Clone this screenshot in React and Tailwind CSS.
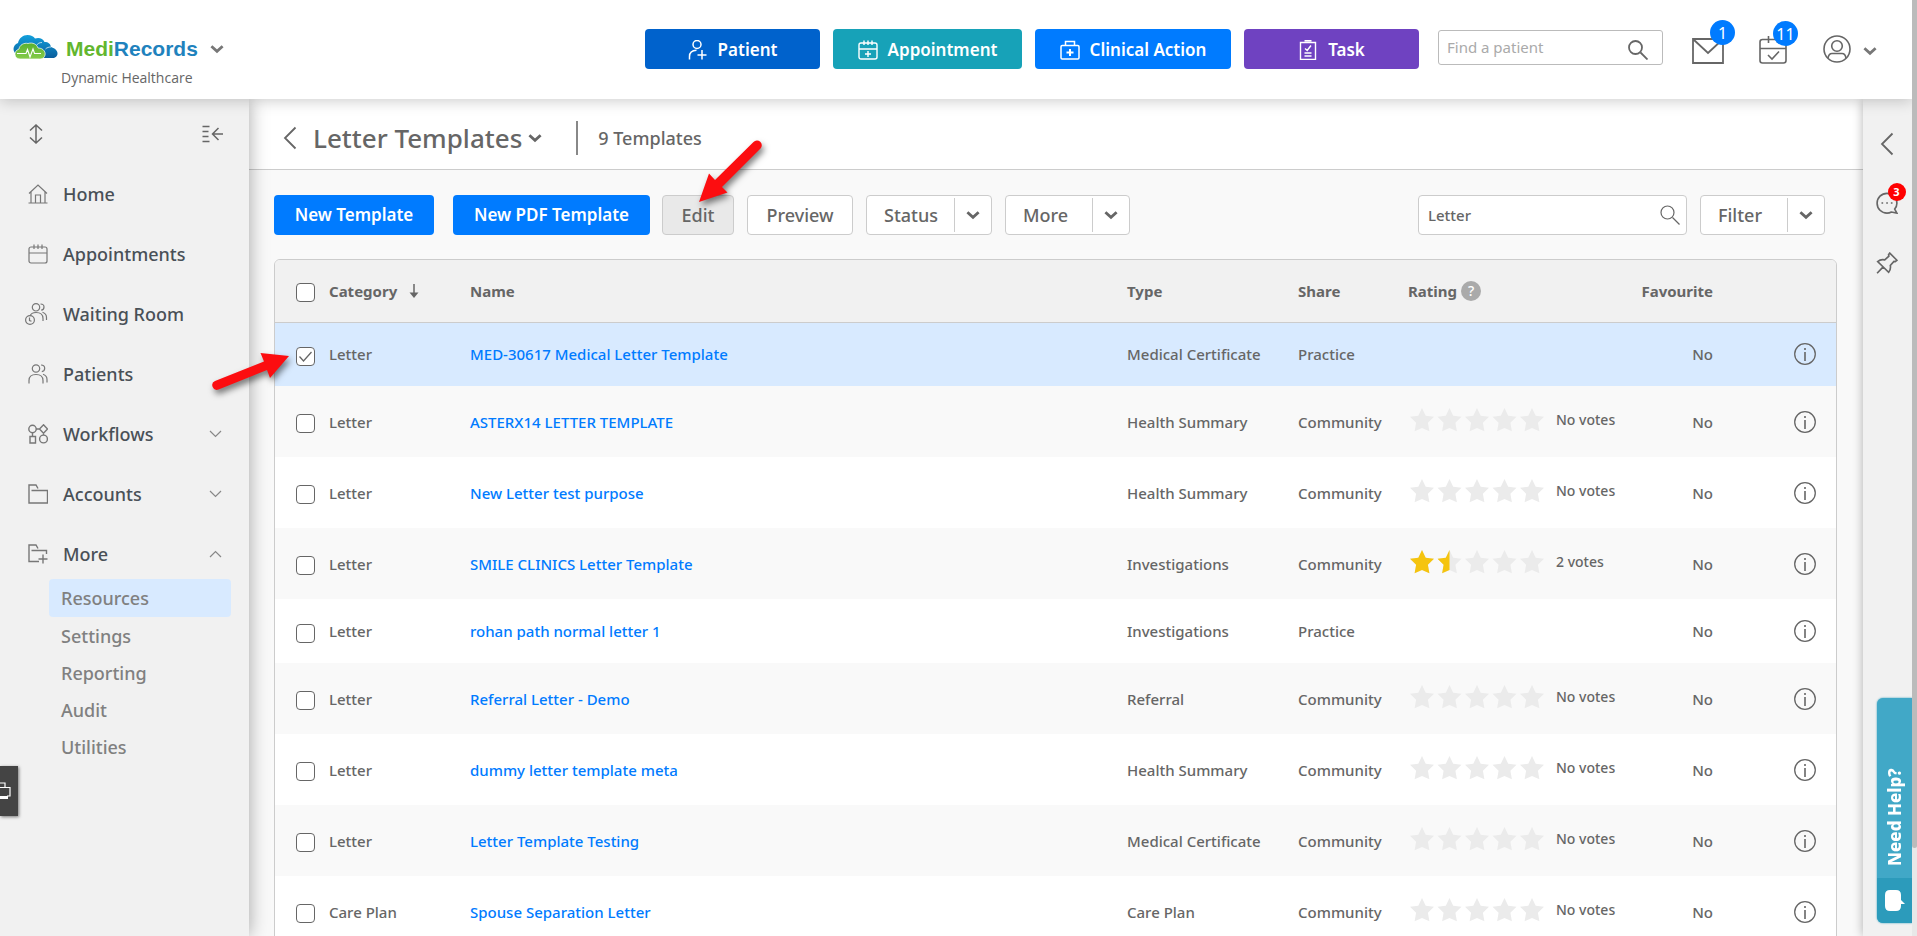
import React, { useState } from 'react';

const TEMPLATES = [
  { id: 1, category: 'Letter', name: 'MED-30617 Medical Letter Template', type: 'Medical Certificate', share: 'Practice' },
  { id: 2, category: 'Letter', name: 'ASTERX14 LETTER TEMPLATE', type: 'Health Summary', share: 'Community', rating: 0, votes: 'No votes' },
  { id: 3, category: 'Letter', name: 'New Letter test purpose', type: 'Health Summary', share: 'Community', rating: 0, votes: 'No votes' },
  { id: 4, category: 'Letter', name: 'SMILE CLINICS Letter Template', type: 'Investigations', share: 'Community', rating: 1.5, votes: '2 votes' },
  { id: 5, category: 'Letter', name: 'rohan path normal letter 1', type: 'Investigations', share: 'Practice' },
  { id: 6, category: 'Letter', name: 'Referral Letter - Demo', type: 'Referral', share: 'Community', rating: 0, votes: 'No votes' },
  { id: 7, category: 'Letter', name: 'dummy letter template meta', type: 'Health Summary', share: 'Community', rating: 0, votes: 'No votes' },
  { id: 8, category: 'Letter', name: 'Letter Template Testing', type: 'Medical Certificate', share: 'Community', rating: 0, votes: 'No votes' },
  { id: 9, category: 'Care Plan', name: 'Spouse Separation Letter', type: 'Care Plan', share: 'Community', rating: 0, votes: 'No votes' },
];

const SUB_ITEMS = ['Resources', 'Settings', 'Reporting', 'Audit', 'Utilities'];

const Icon = ({ size = 20, width = 1.2, className = '', children }) => (
  <svg
    width={size}
    height={size}
    viewBox="0 0 20 20"
    fill="none"
    stroke="currentColor"
    strokeWidth={width}
    className={`shrink-0 ${className}`}
    aria-hidden="true"
  >
    {children}
  </svg>
);

const HomeIcon = () => (
  <Icon>
    <path d="M1 9.500 10 1l9 8.500M3 8v10.500M17 8v10.500M.5 19h19M7.500 18.500v-7.500h5v7.500" />
  </Icon>
);

const CalendarIcon = () => (
  <Icon>
    <rect x="1" y="3" width="18" height="16" rx="2" />
    <path d="M1 9h18M6 .5v4.500M10 .5v4.500M14 .5v4.500" />
  </Icon>
);

const PatientsIcon = () => (
  <Icon>
    <circle cx="8" cy="4.500" r="3.700" />
    <path d="M1 19.500v-3c0-3.500 2.500-6 7-6s7 2.500 7 6v3M13 1c2.300 0 3.700 1.400 3.700 3.300S15.500 7.500 13.800 7.700M15 10.200c2.500.8 4 2.700 4 5.300v3" />
  </Icon>
);

const WaitingIcon = () => (
  <svg width="23" height="22" viewBox="0 0 23 22" fill="none" stroke="currentColor" strokeWidth="1.200" className="-ml-[3px] shrink-0" aria-hidden="true">
    <circle cx="11" cy="4.300" r="3.700" />
    <path d="M5 13c.8-2.300 3-3.500 6-3.500 4.500 0 7 2.500 7 6V18M15.500 1c2.300 0 3.500 1.400 3.500 3s-1 3-2.800 3.200M17.500 9.200c2.500.8 4 2.700 4 5.300v2.500" />
    <circle cx="5" cy="17" r="4.400" />
    <path d="M4.500 14.500v3l2 .7" />
  </svg>
);

const WorkflowIcon = () => (
  <Icon width={1.4}>
    <circle cx="4.500" cy="5" r="3.700" />
    <circle cx="15.500" cy="15" r="3.900" />
    <path d="M15.500.8 19.500 5l-4 4.200L11.500 5zM2 12.500h5.500V19H2zM8 5h3.500M4.500 8.700v3.800M15.500 9.200V11" />
  </Icon>
);

const FolderIcon = () => (
  <Icon width={1.4}>
    <path d="M3.500 6.500h16V19H1V1h7l2 3.500" />
  </Icon>
);

const FolderPlusIcon = () => (
  <Icon width={1.4}>
    <path d="M3.500 6.500h15V10M11 17.500H1V1h7l2 3.500M15 10.500v9M10.500 15h9" />
  </Icon>
);

const PatientPlusIcon = () => (
  <Icon width={1.5}>
    <circle cx="9" cy="4.500" r="4" />
    <path d="M1.500 19.500v-3c0-4 2.500-6 7-6.200M14 10v9.500M9.500 15h9" />
  </Icon>
);

const AppointmentPlusIcon = () => (
  <Icon width={1.4}>
    <rect x="1" y="3" width="18" height="16" rx="2" />
    <path d="M1 9h18M6 .5v4.500M10 .5v4.500M14 .5v4.500M10 11v6M7 14h6" />
  </Icon>
);

const MedkitIcon = () => (
  <Icon width={1.5}>
    <rect x="1" y="5.500" width="18" height="13.500" rx="1.200" />
    <path d="M5.500 5V1.500h9V5" />
    <path d="M10 9v7M6.500 12.500h7" strokeWidth="2" />
  </Icon>
);

const TaskIcon = () => (
  <Icon width={1.4}>
    <path d="M2.500 2.500h15v17h-15zM6.500.7h7M7 8.500l2.200 2L13 5.500M6.500 13h7M6.500 16h7" />
  </Icon>
);

const SearchIcon = ({ width = 1.2 }) => (
  <Icon width={width}>
    <circle cx="7.500" cy="7.500" r="6.500" />
    <path d="m12.500 12.500 7 7" />
  </Icon>
);

const InfoIcon = () => (
  <svg width="22" height="22" viewBox="0 0 22 22" fill="none" stroke="currentColor" strokeWidth="1.300" aria-hidden="true">
    <circle cx="11" cy="11" r="10.300" />
    <path d="M11 9v9M11 5v2" strokeWidth="1.600" />
  </svg>
);

// Heavy chevron used on drop-downs, thin one in the sidebar
const ChevronBold = ({ className = '' }) => (
  <svg width="14" height="10" viewBox="0 0 15 10" fill="none" stroke="currentColor" strokeWidth="3" className={`shrink-0 ${className}`} aria-hidden="true">
    <path d="m1.500 2 6 5.500 6-5.500" />
  </svg>
);

const ChevronThin = ({ up }) => (
  <svg width="13" height="8" viewBox="0 0 13 8" fill="none" stroke="currentColor" strokeWidth="1.200" className="shrink-0" aria-hidden="true">
    <path d={up ? 'm1 7 5.500-5.500L12 7' : 'm1 1 5.500 5.500L12 1'} />
  </svg>
);

const BackIcon = () => (
  <svg width="14" height="24" viewBox="0 0 14 24" fill="none" stroke="currentColor" strokeWidth="1.800" aria-hidden="true">
    <path d="M12.500 1.500 2 12l10.500 10.500" />
  </svg>
);

const Logo = () => (
  <svg width="45" height="25" viewBox="0 0 45 25" className="shrink-0" aria-hidden="true">
    <defs>
      <linearGradient id="cloudBlue" x1="0" y1="0" x2="0" y2="1">
        <stop offset="0" stopColor="#12a0dc" />
        <stop offset="1" stopColor="#0a5e9c" />
      </linearGradient>
      <linearGradient id="cloudGreen" x1="0" y1="0" x2="0" y2="1">
        <stop offset="0" stopColor="#58b030" />
        <stop offset="1" stopColor="#86cc4a" />
      </linearGradient>
    </defs>
    <path d="M5 20C-1 18-1 10 5 8 6 3 10 0 14.500 0c3.500 0 6 1.200 7.500 3.500 4-1.500 8 0 9.500 3.500 4 0 6 2 6.500 5 3 1 6.500 3 6.500 6.500 0 2.500-2 4.500-5 4.500H28z" fill="url(#cloudBlue)" />
    <path d="M29 7.500c-2.500 0-4.500 1-5.500 3M38 12c-2 0-4 .5-5.500 2" stroke="#fff" strokeWidth=".7" fill="none" />
    <path d="M7 24c-6 0-7-8-1-10 .5-4 5-6.500 9-5.500 5-1.500 9 1 10 4.500 6 0 8.500 5 6.500 8.500-1 2-3 2.500-5 2.500z" fill="url(#cloudGreen)" stroke="#fff" strokeWidth=".7" />
    <path d="M4 18.500h9l1.500-4 2.500 7.500 3-8 1.500 4.500H28" stroke="#fff" strokeWidth="1.100" fill="none" />
  </svg>
);

const NavButton = ({ icon, label, className }) => (
  <button className={`flex h-10 items-center justify-center gap-2.5 rounded pt-0.5 text-[17px] font-semibold text-white ${className}`}>
    {icon}
    <span>{label}</span>
  </button>
);

const Header = () => (
  <header className="relative z-30 flex h-[99px] shrink-0 items-start bg-white pr-[35px] text-[#666] shadow-[0_2px_14px_rgba(0,0,0,0.2)]">
    <div className="pl-[13px] pt-[34px]">
      <button className="flex h-[26px] items-center" aria-label="MediRecords menu">
        <Logo />
        <span className="ml-2 pt-1 font-['Liberation_Sans',Arial,sans-serif] text-[21px] leading-[30px] font-bold text-[#1f82bd]">
          <span className="text-[#62b62f]">Medi</span>Records
        </span>
        <ChevronBold className="mt-1 ml-3 text-[#777]" />
      </button>
      <div className="mt-2 pl-12 font-['Open_Sans',sans-serif] text-sm leading-5 font-medium">Dynamic Healthcare</div>
    </div>

    <div className="ml-auto flex gap-[13px] pt-[29px]">
      <NavButton icon={<PatientPlusIcon />} label="Patient" className="w-[175px] bg-[#0062cc]" />
      <NavButton icon={<AppointmentPlusIcon />} label="Appointment" className="w-[189px] bg-[#17a2b8]" />
      <NavButton icon={<MedkitIcon />} label="Clinical Action" className="w-[196px] bg-[#007bff]" />
      <NavButton icon={<TaskIcon />} label="Task" className="w-[175px] bg-[#6f42c1]" />
    </div>

    <label className="mt-[30px] ml-[19px] flex h-[35px] w-[225px] items-center rounded-[3px] border border-[#bbb] bg-white pr-3.5 pl-2">
      <input className="min-w-0 flex-1 text-[15px] outline-none placeholder:text-[#aaa]" placeholder="Find a patient" aria-label="Find a patient" />
      <span className="pt-1">
        <SearchIcon width={1.8} />
      </span>
    </label>

    <button className="relative mt-[38px] ml-[29px]" aria-label="Messages">
      <svg width="32" height="26" viewBox="0 0 32 26" fill="none" stroke="currentColor" strokeWidth="1.800" aria-hidden="true">
        <path d="M1 1h30v24H1zM1.500 1.500 16 15 30.500 1.500" />
      </svg>
      <span className="absolute -top-[18px] left-[18px] flex size-[25px] items-center justify-center rounded-full bg-[#007bff] text-base text-white">1</span>
    </button>
    <button className="relative mt-9 ml-[35px]" aria-label="Tasks due">
      <svg width="28" height="28" viewBox="0 0 28 28" fill="none" stroke="currentColor" strokeWidth="1.600" aria-hidden="true">
        <rect x="1" y="3.500" width="26" height="23.500" rx="2.500" />
        <path d="M1 12.500h26M9.500 0v7M18.500 0v7M9 19l4 4 7-7.500" />
      </svg>
      <span className="absolute -top-[15px] left-[14px] flex size-[25px] items-center justify-center rounded-full bg-[#007bff] text-base text-white">11</span>
    </button>
    <button className="mt-[35px] ml-9 flex items-center gap-3" aria-label="Account">
      <svg width="28" height="28" viewBox="0 0 28 28" fill="none" stroke="currentColor" strokeWidth="1.600" aria-hidden="true">
        <circle cx="14" cy="14" r="13" />
        <circle cx="14" cy="11" r="5.300" />
        <path d="M5 23c.5-3 2-4.500 4-4.500h10c2 0 3.500 1.500 4 4.500" />
      </svg>
      <ChevronBold className="mt-1 text-[#777]" />
    </button>
  </header>
);

const NavItem = ({ icon, label, chevron }) => (
  <a href="#" className="flex h-[60px] items-center pr-[27px] pl-7 text-[#495057]">
    <span className="flex w-[35px] text-[#777]">{icon}</span>
    <span className="flex-1 text-lg font-medium">{label}</span>
    {chevron && (
      <span className="text-[#888]">
        <ChevronThin up={chevron === 'up'} />
      </span>
    )}
  </a>
);

const Sidebar = () => (
  <aside className="relative z-20 w-[249px] shrink-0 bg-[#f1f1f1] shadow-[0_0_18px_rgba(0,0,0,0.35)]">
    <div className="flex h-[65px] items-center justify-between pt-1 pr-[26px] pl-[29px] text-[#666]">
      <button aria-label="Expand">
        <svg width="14" height="20" viewBox="0 0 14 20" fill="none" stroke="currentColor" strokeWidth="1.500" aria-hidden="true">
          <path d="M7 1v18M1 6.500 7 1l6 5.500M1 13.500 7 19l6-5.500" />
        </svg>
      </button>
      <button aria-label="Collapse menu">
        <svg width="21" height="18" viewBox="0 0 21 18" fill="none" stroke="currentColor" strokeWidth="1.500" aria-hidden="true">
          <path d="M.5 1.500h7M.5 6.500h6M.5 11.500h6M.5 16.500h7M21 9H10.500M16.500 3l-6 6 6 6" />
        </svg>
      </button>
    </div>
    <nav>
      <NavItem icon={<HomeIcon />} label="Home" />
      <NavItem icon={<CalendarIcon />} label="Appointments" />
      <NavItem icon={<WaitingIcon />} label="Waiting Room" />
      <NavItem icon={<PatientsIcon />} label="Patients" />
      <NavItem icon={<WorkflowIcon />} label="Workflows" chevron="down" />
      <NavItem icon={<FolderIcon />} label="Accounts" chevron="down" />
      <NavItem icon={<FolderPlusIcon />} label="More" chevron="up" />
      <div className="-mt-[5px] pr-[18px] pl-[49px]">
        {SUB_ITEMS.map((item) => (
          <a
            key={item}
            href="#"
            className={`flex items-center rounded pl-3 text-lg font-medium text-[#808080] ${item === 'Resources' ? 'h-[38px] bg-[#d8eaff]' : 'h-[37px]'}`}
          >
            {item}
          </a>
        ))}
      </div>
    </nav>
    <button className="absolute top-[667px] left-0 h-[50px] w-[18px] bg-[#444] text-white shadow-[1px_1px_3px_rgba(0,0,0,0.5)]" aria-label="Print">
      <svg width="11" height="20" viewBox="0 0 11 20" fill="none" stroke="currentColor" strokeWidth="1.200" aria-hidden="true">
        <path d="M0 2h5v4M0 6.500h10v8.500H7" />
        <path d="M0 16.500h8" strokeWidth="3" />
      </svg>
    </button>
  </aside>
);

const SplitButton = ({ label, className }) => (
  <div className={`flex h-10 items-center rounded border border-[#ccc] bg-white ${className}`}>
    <button className="flex-1 pl-[17px] text-left text-lg font-medium">{label}</button>
    <button className="flex h-[34px] w-[37px] items-center justify-center border-l border-[#ccc]" aria-label={`${label} options`}>
      <ChevronBold />
    </button>
  </div>
);

const Toolbar = () => (
  <div className="flex items-center pt-[25px] pr-[38px] pl-[25px]">
    <button className="h-10 w-40 rounded bg-[#007bff] text-[17px] font-semibold text-white">New Template</button>
    <button className="ml-[19px] h-10 w-[197px] rounded bg-[#007bff] text-[17px] font-semibold text-white">New PDF Template</button>
    <button className="ml-3 h-10 w-[72px] rounded border border-[#ccc] bg-[#e9e9e9] text-lg font-medium">Edit</button>
    <button className="ml-[13px] h-10 w-[106px] rounded border border-[#ccc] bg-white text-lg font-medium">Preview</button>
    <SplitButton label="Status" className="ml-[13px] w-[126px]" />
    <SplitButton label="More" className="ml-[13px] w-[125px]" />
    <label className="mr-[13px] ml-auto flex h-10 w-[269px] items-center rounded border border-[#ccc] bg-white pr-1.5 pl-[9px]">
      <input className="min-w-0 flex-1 text-[15px] font-medium outline-none" defaultValue="Letter" aria-label="Search templates" />
      <SearchIcon />
    </label>
    <SplitButton label="Filter" className="w-[125px]" />
  </div>
);

const Checkbox = ({ checked, onChange, label }) => (
  <span className="relative top-0.5 ml-[21px] grid size-[19px] place-items-center">
    <input
      type="checkbox"
      checked={checked}
      onChange={onChange}
      aria-label={label}
      className="col-start-1 row-start-1 size-[19px] appearance-none rounded border border-[#666] bg-white"
    />
    {checked && (
      <svg width="13" height="11" viewBox="0 0 13 11" fill="none" stroke="currentColor" strokeWidth="1.300" className="pointer-events-none z-10 col-start-1 row-start-1" aria-hidden="true">
        <path d="M.5 5.500 4.500 10l8-9" />
      </svg>
    )}
  </span>
);

const STAR = 'M12 0l3.700 7.700 8.300 1.100-6.100 5.900 1.500 8.500L12 20.100 4.600 23.200l1.500-8.500L0 8.800l8.300-1.100z';

const Stars = ({ rating }) => (
  <svg width="136" height="24" viewBox="0 0 136 24" className="shrink-0" role="img" aria-label={`${rating} stars`}>
    <defs>
      <clipPath id="half">
        <rect width="12" height="24" />
      </clipPath>
    </defs>
    {[0, 1, 2, 3, 4].map((i) => (
      <g key={i} transform={`translate(${i * 27.5} 0)`}>
        <path d={STAR} fill="#ebebeb" />
        {rating > i && <path d={STAR} fill="#f5c40f" clipPath={rating - i < 1 ? 'url(#half)' : undefined} />}
      </g>
    ))}
  </svg>
);

const TemplateTable = () => {
  const [selected, setSelected] = useState([1]);

  const toggle = (id) => {
    setSelected(selected.includes(id) ? selected.filter((s) => s !== id) : [...selected, id]);
  };

  const toggleAll = () => {
    setSelected(selected.length === TEMPLATES.length ? [] : TEMPLATES.map((t) => t.id));
  };

  return (
    <div className="mt-6 mr-[26px] ml-[25px] overflow-hidden rounded-t-md border border-[#ccc]">
      <table className="w-full table-fixed text-left text-[15px] leading-5">
        <colgroup>
          <col className="w-[54px]" />
          <col className="w-[141px]" />
          <col />
          <col className="w-[171px]" />
          <col className="w-[110px]" />
          <col className="w-[200px]" />
          <col className="w-[105px]" />
          <col className="w-[123px]" />
        </colgroup>
        <thead>
          <tr className="h-[62px] border-b border-[#ccc] bg-[#f1f1f1] font-bold">
            <th>
              <Checkbox checked={selected.length === TEMPLATES.length} onChange={toggleAll} label="Select all" />
            </th>
            <th>
              <span className="flex items-center gap-3">
                Category
                <svg width="10" height="14" viewBox="0 0 10 14" aria-hidden="true">
                  <path d="M5 0v10" stroke="currentColor" strokeWidth="1.500" />
                  <path d="M.5 8.500h9L5 14z" fill="currentColor" />
                </svg>
              </span>
            </th>
            <th>Name</th>
            <th>Type</th>
            <th>Share</th>
            <th>
              <span className="flex items-center gap-1">
                Rating
                <span className="flex size-5 items-center justify-center rounded-full bg-[#aaa] text-sm font-medium text-white">?</span>
              </span>
            </th>
            <th className="text-right">Favourite</th>
            <th />
          </tr>
        </thead>
        <tbody className="font-medium">
          {TEMPLATES.map((t) => (
            <tr
              key={t.id}
              className={`${t.votes ? 'h-[71px]' : 'h-16'} ${selected.includes(t.id) ? 'bg-[#d8eaff]' : 'odd:bg-white even:bg-[#f9f9f9]'}`}
            >
              <td>
                <Checkbox checked={selected.includes(t.id)} onChange={() => toggle(t.id)} label={`Select ${t.name}`} />
              </td>
              <td>{t.category}</td>
              <td>
                <a href="#" className="text-[#007bff]">{t.name}</a>
              </td>
              <td>{t.type}</td>
              <td>{t.share}</td>
              <td>
                {t.votes && (
                  <span className="flex items-center gap-2.5 pb-1 pl-0.5 text-sm whitespace-nowrap">
                    <Stars rating={t.rating} />
                    {t.votes}
                  </span>
                )}
              </td>
              <td className="text-right">No</td>
              <td>
                <button className="mr-5 ml-auto block" aria-label={`About ${t.name}`}>
                  <InfoIcon />
                </button>
              </td>
            </tr>
          ))}
        </tbody>
      </table>
    </div>
  );
};

const RightRail = () => (
  <aside className="relative z-20 flex w-[49px] shrink-0 flex-col items-center bg-[#f1f1f1] pt-[33px] pr-0.5 text-[#666] shadow-[0_0_10px_rgba(0,0,0,0.3)]">
    <button aria-label="Open panel">
      <BackIcon />
    </button>
    <button className="relative mt-9" aria-label="Chat">
      <Icon size={22} width={1.5}>
        <path d="M17 15.500c1.300-1.500 2-3.200 2-5.300 0-5-4-9-9-9s-9 4-9 9 4 9 9 9c1.500 0 2.700-.3 4-1l5 1z" />
        <path d="M5 10h1.500M9.300 10h1.500M13.500 10H15" />
      </Icon>
      <span className="absolute -top-[9px] left-3 flex size-[18px] items-center justify-center rounded-full bg-[#f00] text-[11px] font-bold text-white">3</span>
    </button>
    <button className="mt-[38px]" aria-label="Pin">
      <Icon size={22} width={1.5}>
        <path d="M12.500 1 19 7.500l-1.500 1.200-1.200-.2-3.300 3.700c.5 2.300 0 4.300-1.500 6.300L1.500 8.700C3.500 7 5.700 6.600 8 7.200L11.700 3.800l-.3-1.300zM6.500 13.500 1 19.300" />
      </Icon>
    </button>
    <a
      href="#"
      className="absolute top-[599px] right-0 flex h-[225px] w-[35px] flex-col overflow-hidden rounded-l-md bg-[#41a8c7] text-white shadow-[0_0_2px_#2c9bbb]"
    >
      <span className="flex flex-1 rotate-180 items-center pt-3 [writing-mode:vertical-rl]">
        <span className="text-[17px] leading-[35px] font-extrabold">Need Help?</span>
      </span>
      <span className="flex h-[45px] items-center justify-center bg-[#2c9bbb]">
        <svg width="20" height="22" viewBox="0 0 20 22" fill="#fff" aria-hidden="true">
          <path d="M5 0h6q5 0 5 5v5l4 4h-4v2q0 5-5 5H5q-5 0-5-5V5q0-5 5-5z" />
        </svg>
      </span>
    </a>
  </aside>
);

// Red pointers that sit over the page
const Pointers = () => (
  <svg className="pointer-events-none absolute top-0 left-0 z-40 drop-shadow-[2px_4px_3px_rgba(0,0,0,0.5)]" width="780" height="400" fill="#fc0d10" aria-hidden="true">
    <path d="M699 202 709 173.500 715 180 753.500 142A4.600 4.600 0 0 1 760.500 148.500L722 187 727.500 192.500z" />
    <path d="M289 356 260.500 353 264 361.500 215 381A4.600 4.600 0 0 0 218.500 389.500L267 370 270 378z" />
  </svg>
);

const App = () => (
  <div className="relative flex h-screen overflow-hidden bg-[#f9f9f9] font-['Noto_Sans',sans-serif] text-[#666]">
    <div className="flex min-w-0 flex-1 flex-col">
      <Header />
      <div className="flex min-h-0 flex-1">
        <Sidebar />
        <main className="min-w-0 flex-1 overflow-hidden">
          <div className="flex h-[71px] items-center border-b border-[#ccc] bg-white pt-2 pl-[34px]">
            <button aria-label="Back">
              <BackIcon />
            </button>
            <button className="ml-4 flex items-center gap-1.5">
              <h1 className="text-[26px] font-medium">Letter Templates</h1>
              <ChevronBold />
            </button>
            <span className="ml-[34px] h-[34px] w-0.5 bg-[#888]" />
            <span className="ml-5 text-lg font-medium">9 Templates</span>
          </div>
          <Toolbar />
          <TemplateTable />
        </main>
        <RightRail />
      </div>
    </div>
    <div className="relative z-40 w-[5px] shrink-0 bg-[#e8e8e8]">
      <div className="h-[90.600%] rounded-b bg-[#bbb]" />
    </div>
    <Pointers />
  </div>
);

export default App;
